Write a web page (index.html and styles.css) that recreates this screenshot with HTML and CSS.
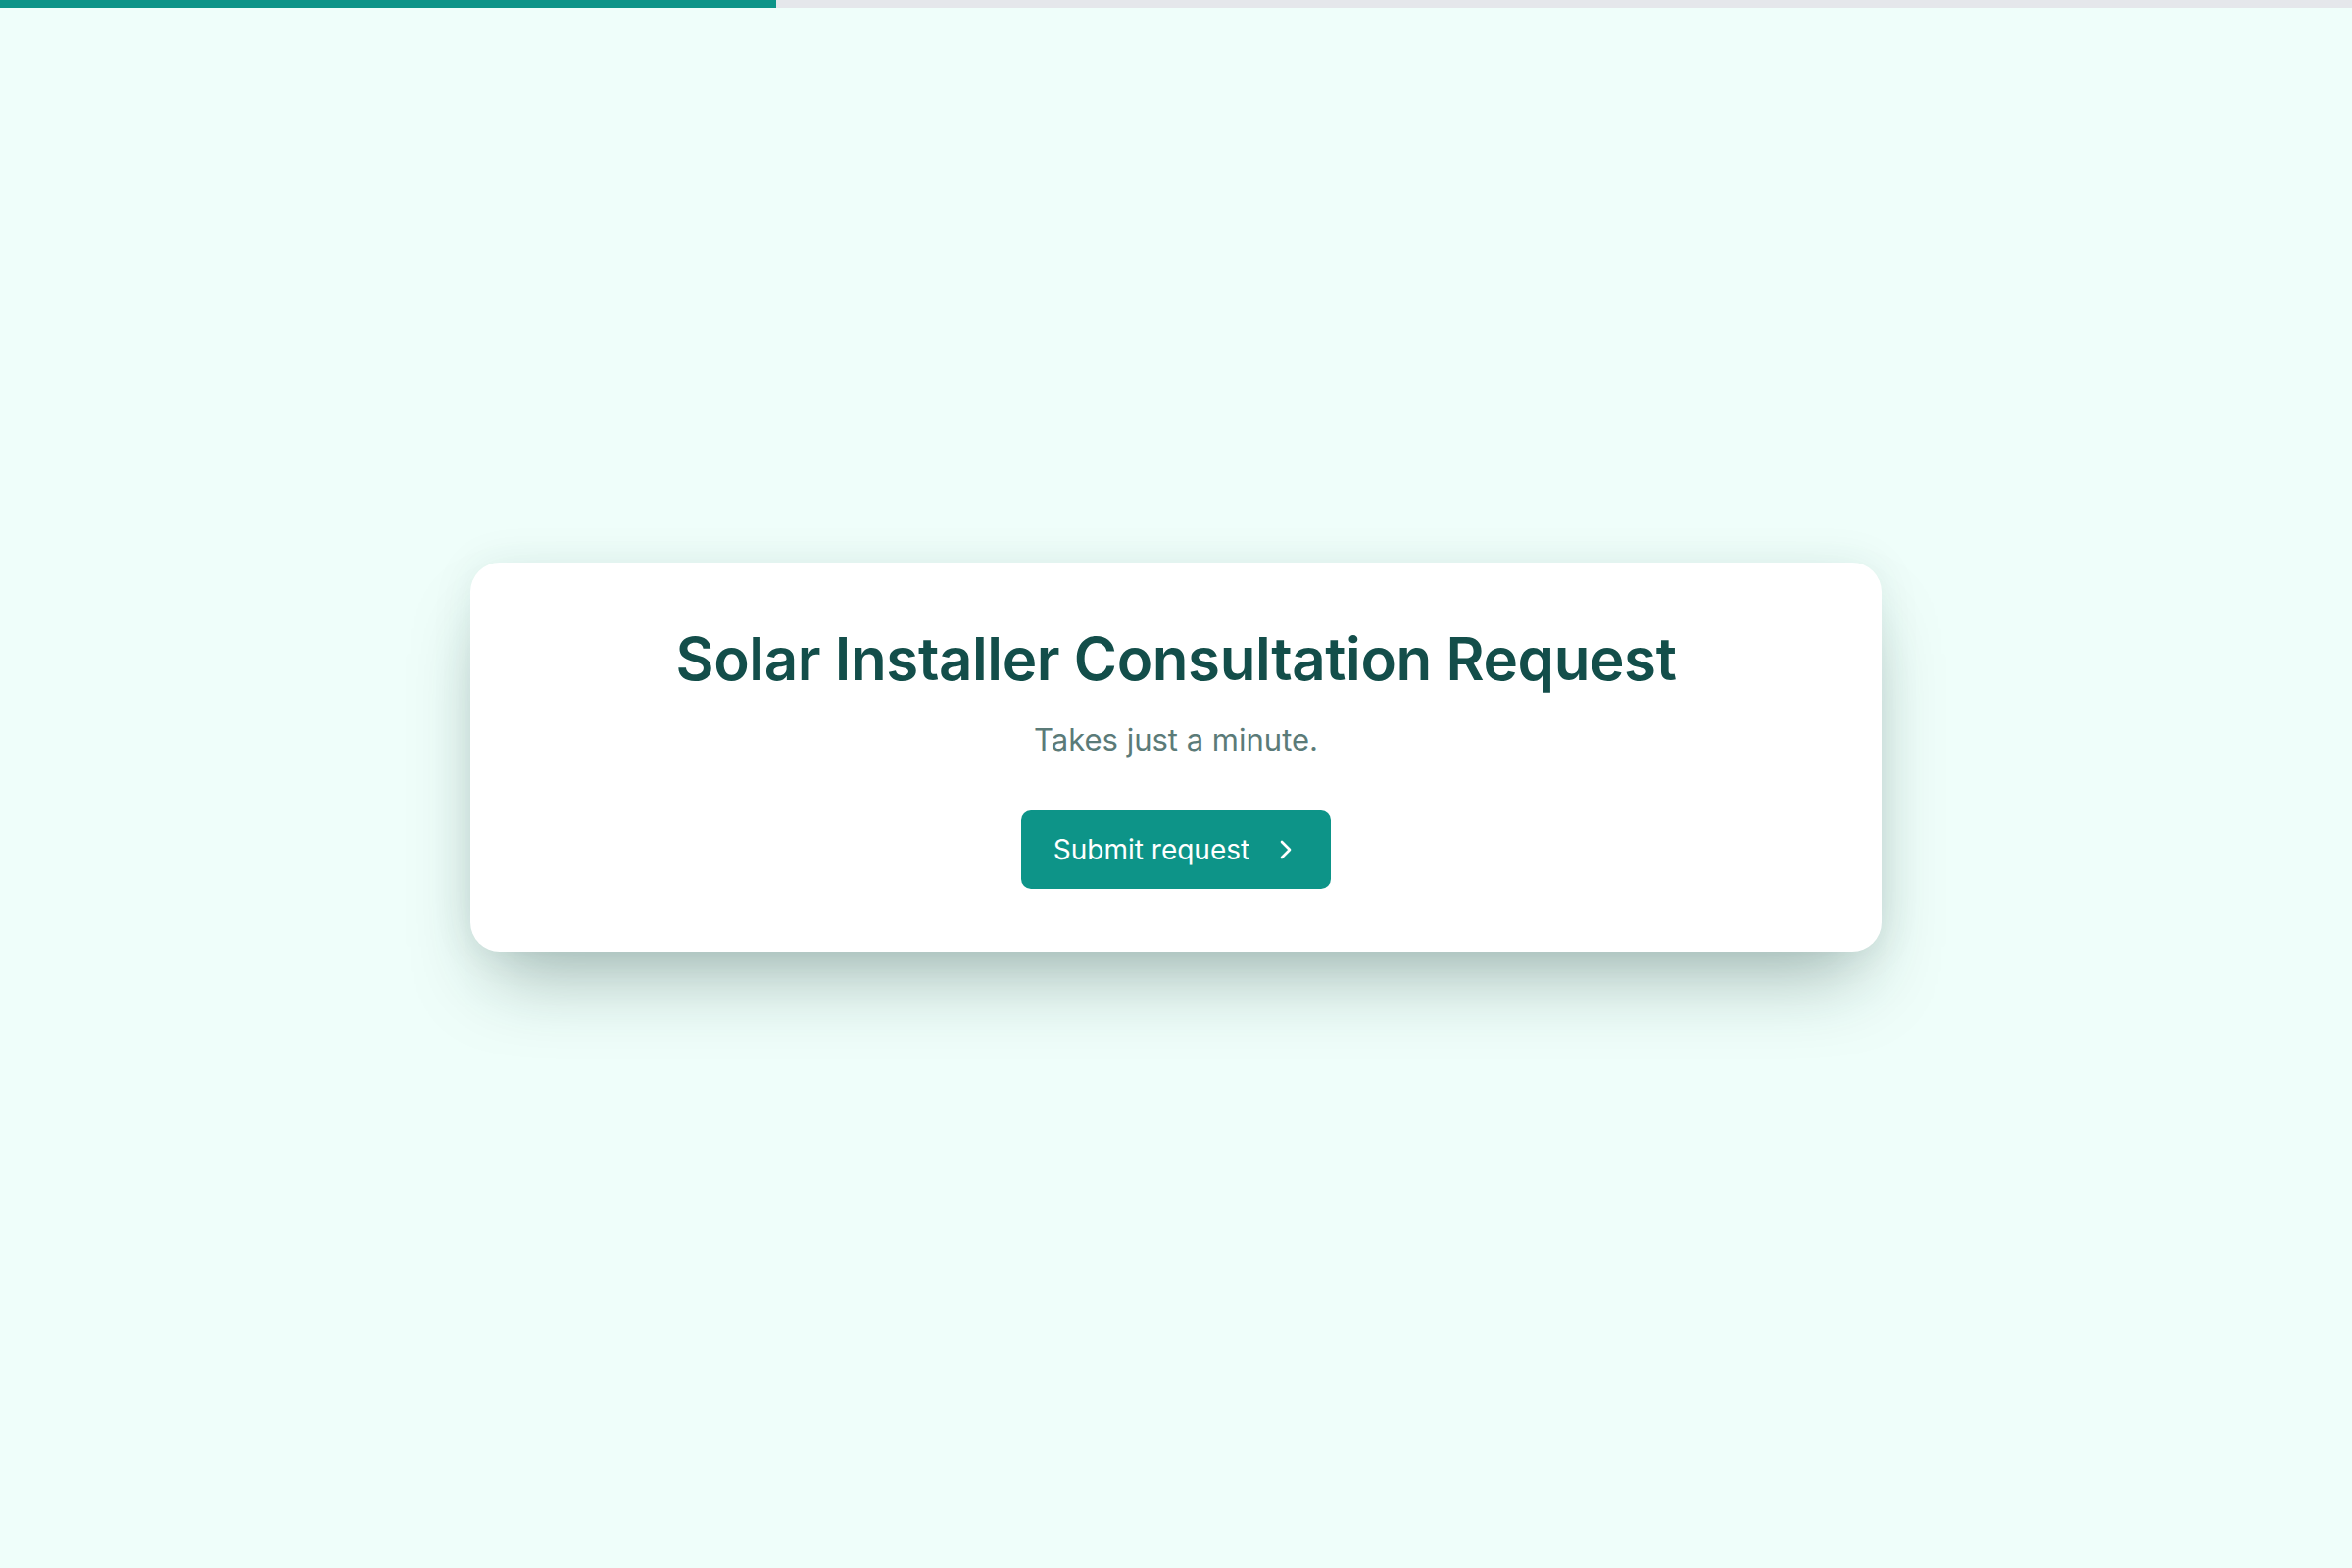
FILE: index.html
```html
<!DOCTYPE html>
<html lang="en">
<head>
    <meta charset="UTF-8">
    <meta name="viewport" content="width=device-width, initial-scale=1.0">
    <title>Solar Installer Consultation Request</title>
    <link rel="stylesheet" href="styles.css">
</head>
<body>
    <div class="progress"><div class="progress-fill" style="width: 33%"></div></div>
    <main class="page">
        <div class="card">
            <h1>Solar Installer Consultation Request</h1>
            <p class="subtitle">Takes just a minute.</p>
            <button type="button" class="submit">
                Submit request
                <svg viewBox="0 0 24 24" fill="none" stroke="currentColor" stroke-width="2" stroke-linecap="round" stroke-linejoin="round"><path d="M9 6l6 6-6 6"/></svg>
            </button>
        </div>
    </main>
</body>
</html>
```

FILE: styles.css
```css
body {
    margin: 0;
    font-family: Inter, "Noto Sans", sans-serif;
    background-color: #effefa;
    color: #134e4a;
}
.progress {
    height: 8px;
    background: #e5e7eb;
}
.progress-fill {
    height: 100%;
    background: #0d9488;
}
.page {
    min-height: 1592px;
    box-sizing: border-box;
    padding-bottom: 64px;
    display: flex;
    align-items: center;
    justify-content: center;
}
.card {
    width: 1440px;
    box-sizing: border-box;
    padding: 64px 48px 64px;
    background: white;
    border-radius: 30px;
    box-shadow: 0 44px 80px -22px rgba(20, 55, 50, 0.35), 0 0 44px rgba(20, 80, 70, 0.08);
    text-align: center;
}
h1 {
    margin: 0;
    font-size: 60px;
    line-height: 1.15;
    font-weight: 600;
    letter-spacing: -0.4px;
}
.subtitle {
    margin: 29px 0 0;
    font-size: 31px;
    color: #5b7b78;
}
.submit {
    margin-top: 54px;
    height: 80px;
    padding: 0 30px 0 33px;
    display: inline-flex;
    align-items: center;
    gap: 21px;
    background-color: #0d9488;
    color: white;
    border: none;
    border-radius: 10px;
    font-family: inherit;
    font-size: 28px;
    cursor: pointer;
}
.submit svg {
    width: 32px;
    height: 32px;
}
```
